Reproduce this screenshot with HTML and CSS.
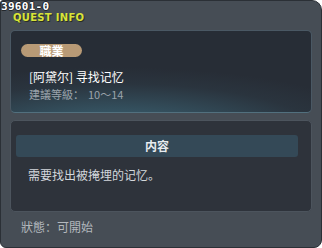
FILE: index.html
```html
<!DOCTYPE html>
<html lang="zh">
<head>
<meta charset="UTF-8">
<meta name="viewport" content="width=device-width, initial-scale=1.0">
<link rel="stylesheet" href="styles.css">
</head>
<body>
  <div class="panel">
    <div class="quest-code">39601-0</div>
    <div class="panel-title">QUEST INFO</div>

    <div class="card card-top">
      <div class="badge">職業</div>
      <div class="quest-name">[阿黛尔] 寻找记忆</div>
      <div class="quest-level">建議等級：<span class="num">10～14</span></div>
    </div>

    <div class="card card-body">
      <div class="section-head">内容</div>
      <div class="section-text">需要找出被掩埋的记忆。</div>
    </div>

    <div class="status">狀態：可開始</div>
  </div>
</body>
</html>
```

FILE: styles.css
```css
body {
  margin: 0;
  background-color: #fff;
  font-family: "Noto Sans CJK SC", "Liberation Sans", sans-serif;
}

.panel {
  position: relative;
  box-sizing: border-box;
  width: 322px;
  height: 248px;
  padding: 0 9px;
  background-color: #464d55;
  border: 1px solid #2b3036;
  border-radius: 3px 10px 8px 6px;
}

/* kleines Label oben links, liegt über dem Rahmen */
.quest-code {
  position: absolute;
  left: 0;
  top: 0;
  font-family: "DejaVu Sans Mono", monospace;
  font-size: 11px;
  font-weight: bold;
  line-height: 11px;
  letter-spacing: 0.3px;
  color: #fff;
  text-shadow: 1px 0 0 #22272c, -1px 0 0 #22272c, 0 1px 0 #22272c, 0 -1px 0 #22272c;
}

.panel-title {
  box-sizing: border-box;
  height: 29px;
  padding: 12px 0 0 3px;
  font-family: "DejaVu Sans", sans-serif;
  font-weight: bold;
  font-size: 10px;
  line-height: 10px;
  letter-spacing: 0.3px;
  color: #d9e43a;
  text-shadow: 1px 1px 0 #2a2e22;
}

.card {
  box-sizing: border-box;
  border-radius: 5px;
}

.card-top {
  height: 83px;
  padding: 13px 10px 0 10px;
  border: 1px solid #4a5864;
  border-bottom-color: #52707e;
  background: radial-gradient(ellipse 90% 80% at 35% 125%, #41687a 0%, #34505e 35%, #2a343e 75%, #272d36 100%);
}

.badge {
  width: 61px;
  height: 13px;
  border-radius: 7px;
  background-color: #b89a76;
  color: #fff;
  font-size: 12px;
  font-weight: bold;
  line-height: 13px;
  text-align: center;
}

.quest-name {
  margin-top: 13px;
  padding-left: 8px;
  font-size: 12px;
  line-height: 14px;
  color: #fff;
}

.quest-level {
  margin-top: 4px;
  padding-left: 8px;
  font-size: 11px;
  line-height: 13px;
  color: #9aa3ab;
}

.quest-level .num {
  margin-left: 4px;
}

.card-body {
  height: 92px;
  margin-top: 7px;
  padding: 14px 13px 0 5px;
  border: 1px solid #4c545d;
  background-color: #2e333b;
}

.section-head {
  height: 22px;
  border-radius: 3px;
  background-color: #344957;
  color: #e8ecef;
  font-size: 12px;
  font-weight: bold;
  line-height: 22px;
  text-align: center;
}

.section-text {
  margin-top: 11px;
  padding-left: 12px;
  font-size: 12px;
  line-height: 14px;
  color: #d3d7db;
}

.status {
  margin-top: 8px;
  padding-left: 11px;
  font-size: 12px;
  line-height: 14px;
  color: #b3b8bd;
}
```
